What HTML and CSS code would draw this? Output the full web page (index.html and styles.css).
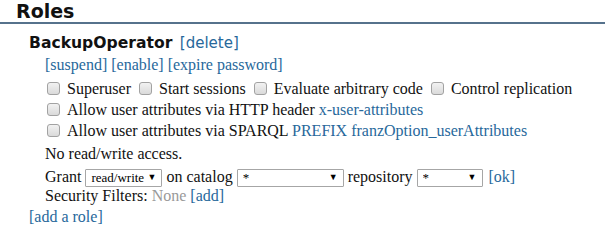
FILE: index.html
```html
<!DOCTYPE html>
<html lang="en">
<head>
  <meta charset="UTF-8" />
  <title>Roles</title>
  <link rel="stylesheet" href="styles.css">
</head>
<body>
  <h2 class="section-title">Roles</h2>

  <div class="role">
    <div class="role-name">BackupOperator <a href="#" class="sans-link">[delete]</a></div>

    <div class="role-body">
      <div class="line">
        <a href="#">[suspend]</a> <a href="#">[enable]</a> <a href="#">[expire password]</a>
      </div>

      <div class="perm-row">
        <input type="checkbox"><span class="perm">Superuser</span>
        <input type="checkbox"><span class="perm">Start sessions</span>
        <input type="checkbox"><span class="perm">Evaluate arbitrary code</span>
        <input type="checkbox"><span class="perm">Control replication</span>
      </div>
      <div class="perm-row">
        <input type="checkbox"><span class="perm">Allow user attributes via HTTP header <a href="#">x-user-attributes</a></span>
      </div>
      <div class="perm-row">
        <input type="checkbox"><span class="perm">Allow user attributes via SPARQL <a href="#">PREFIX franzOption_userAttributes</a></span>
      </div>

      <div class="line access">No read/write access.</div>

      <div class="grant-row">
        Grant
        <span class="select select-mode"><select><option>read/write</option></select></span>
        on catalog
        <span class="select select-catalog"><select><option>*</option></select></span>
        repository
        <span class="select select-repo"><select><option>*</option></select></span>
        <a href="#" class="ok">[ok]</a>
      </div>

      <div class="line filters">Security Filters: <span class="muted">None</span> <a href="#">[add]</a></div>
    </div>
  </div>

  <div class="line add-role"><a href="#">[add a role]</a></div>
</body>
</html>
```

FILE: styles.css
```css
html, body {
  margin: 0;
  padding: 0;
  background: #fff;
  color: #111;
  font-family: 'Liberation Serif', 'Times New Roman', serif;
  font-size: 16px;
}

a {
  color: #27689b;
  text-decoration: none;
}

.section-title {
  margin: 0;
  padding: 0 16px;
  height: 22px;
  line-height: 22px;
  font-family: 'DejaVu Sans', Verdana, sans-serif;
  font-size: 19px;
  font-weight: bold;
  color: #111;
  border-bottom: 2px solid #56728c;
}

.role {
  padding-left: 29px;
}

.role-name {
  margin-top: 9px;
  line-height: 20px;
  font-family: 'DejaVu Sans', Verdana, sans-serif;
  font-size: 15.6px;
  font-weight: bold;
}

.sans-link {
  font-size: 15px;
  font-weight: normal;
  margin-left: 2px;
}

.role-body {
  padding-left: 16px;
}

.line {
  line-height: 20px;
}

.role-body > .line:first-child {
  margin-top: 2px;
  margin-bottom: 3px;
}

.perm-row {
  display: flex;
  align-items: center;
  height: 21px;
}

.perm-row input {
  appearance: none;
  -webkit-appearance: none;
  width: 13px;
  height: 13px;
  margin: 0 7px 0 2px;
  border: 1px solid #a2a2a2;
  border-radius: 3px;
  background: linear-gradient(#f2f2f2, #dadada);
}

.perm {
  margin-right: 6px;
  white-space: nowrap;
}

.access {
  margin-top: 3px;
}

.grant-row {
  display: flex;
  align-items: center;
  gap: 4px;
  height: 22px;
  margin-top: 2px;
}

.select {
  position: relative;
  display: inline-block;
  height: 18px;
}

.select select {
  appearance: none;
  -webkit-appearance: none;
  box-sizing: border-box;
  height: 18px;
  width: 100%;
  margin: 0;
  padding: 0 0 0 5px;
  border: 1px solid #a6a6a6;
  border-radius: 1px;
  background: #fff;
  color: #000;
  font-family: 'Liberation Serif', 'Times New Roman', serif;
  font-size: 13px;
}

.select::after {
  content: "\25BC";
  position: absolute;
  right: 6px;
  top: 3px;
  font-size: 9px;
  line-height: 12px;
  color: #000;
  pointer-events: none;
}

.select-mode { width: 77px; }
.select-catalog { width: 107px; }
.select-repo { width: 66px; }

.ok {
  margin-left: 2px;
}

.filters {
  margin-top: -2px;
}

.muted {
  color: #999;
}

.add-role {
  padding-left: 29px;
  margin-top: 1px;
}
```
